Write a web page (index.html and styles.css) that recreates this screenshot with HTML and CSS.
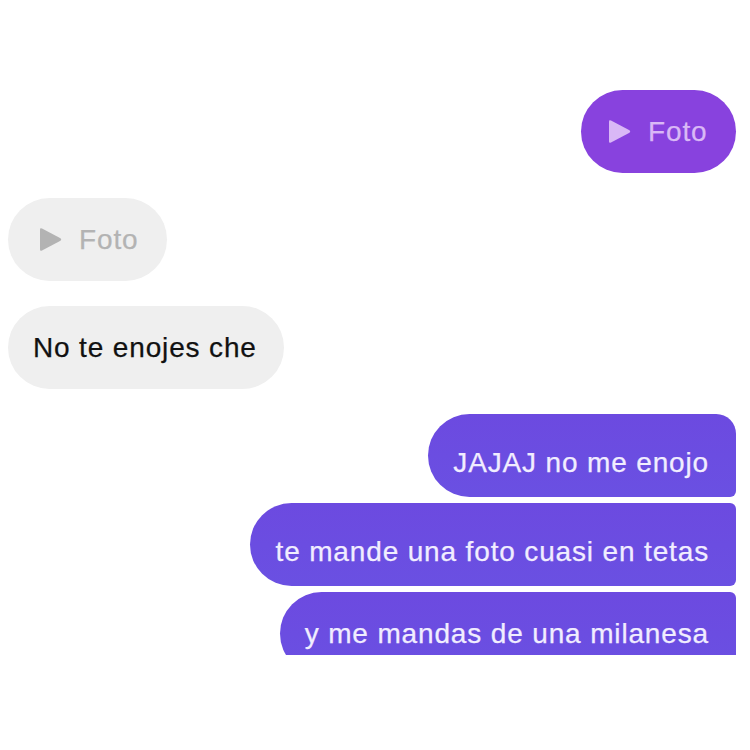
FILE: index.html
```html
<!DOCTYPE html>
<html lang="es">
<head>
<meta charset="utf-8">
<title>Chat</title>
<link rel="stylesheet" href="styles.css">
</head>
<body>
<div class="chat">
  <div class="row row-out gap-big">
    <div class="bubble foto foto-out">
      <svg class="play" viewBox="0 0 22 25" width="22" height="25"><path d="M2 1.5 L20.5 11.2 Q22 12.5 20.5 13.8 L2 23.5 Q0 24.5 0 22.5 L0 2.5 Q0 0.5 2 1.5 Z"/></svg>
      <span>Foto</span>
    </div>
  </div>
  <div class="row row-in gap-big">
    <div class="bubble foto foto-in">
      <svg class="play" viewBox="0 0 22 25" width="22" height="25"><path d="M2 1.5 L20.5 11.2 Q22 12.5 20.5 13.8 L2 23.5 Q0 24.5 0 22.5 L0 2.5 Q0 0.5 2 1.5 Z"/></svg>
      <span>Foto</span>
    </div>
  </div>
  <div class="row row-in gap-big">
    <div class="bubble msg-in">No te enojes che</div>
  </div>
  <div class="row row-out gap-small">
    <div class="bubble msg-out first">JAJAJ no me enojo</div>
  </div>
  <div class="row row-out gap-small">
    <div class="bubble msg-out middle wide">te mande una foto cuasi en tetas</div>
  </div>
  <div class="row row-out">
    <div class="bubble msg-out last">y me mandas de una milanesa</div>
  </div>
</div>
</body>
</html>
```
FILE: styles.css
```css
html, body {
  margin: 0;
  padding: 0;
  background: #ffffff;
}

.chat {
  height: 655px;
  overflow: hidden;
  padding: 90px 14px 0 8px;
  box-sizing: border-box;
  display: flex;
  flex-direction: column;
  font-family: "Liberation Sans", Arial, sans-serif;
  font-size: 28px;
  letter-spacing: 0.85px;
  -webkit-text-stroke: 0.25px currentColor;
}

.row {
  display: flex;
}

.row-out {
  justify-content: flex-end;
}

.row-in {
  justify-content: flex-start;
}

.gap-big {
  margin-bottom: 25px;
}

.gap-small {
  margin-bottom: 6px;
}

.bubble {
  height: 83px;
  box-sizing: border-box;
  display: flex;
  align-items: center;
  border-radius: 42px;
  white-space: nowrap;
  line-height: 33px;
}

.foto {
  gap: 17px;
  padding: 0 30px 0 28px;
}

.foto-out {
  background: #8842de;
  color: #d9b8f6;
  width: 155px;
}

.foto-out .play {
  fill: #d9b8f6;
}

.foto-in {
  background: #efefef;
  color: #b3b3b3;
  width: 159px;
  padding-left: 32px;
}

.foto-in .play {
  fill: #b3b3b3;
}

.play {
  flex: none;
}

.msg-in {
  background: #efefef;
  color: #111111;
  padding: 0 27px 0 25px;
}

.msg-out {
  background: linear-gradient(180deg, #6c4ae0 0%, #6a50e2 100%);
  color: #f1edff;
  padding: 14px 27px 0 25px;
}

.msg-out.first {
  border-radius: 42px 20px 6px 42px;
}

.msg-out.middle {
  border-radius: 42px 6px 6px 42px;
}

.msg-out.wide {
  padding-left: 26px;
}

.msg-out.last {
  border-radius: 42px 6px 6px 42px;
  padding-top: 0;
  padding-left: 25px;
}
```
